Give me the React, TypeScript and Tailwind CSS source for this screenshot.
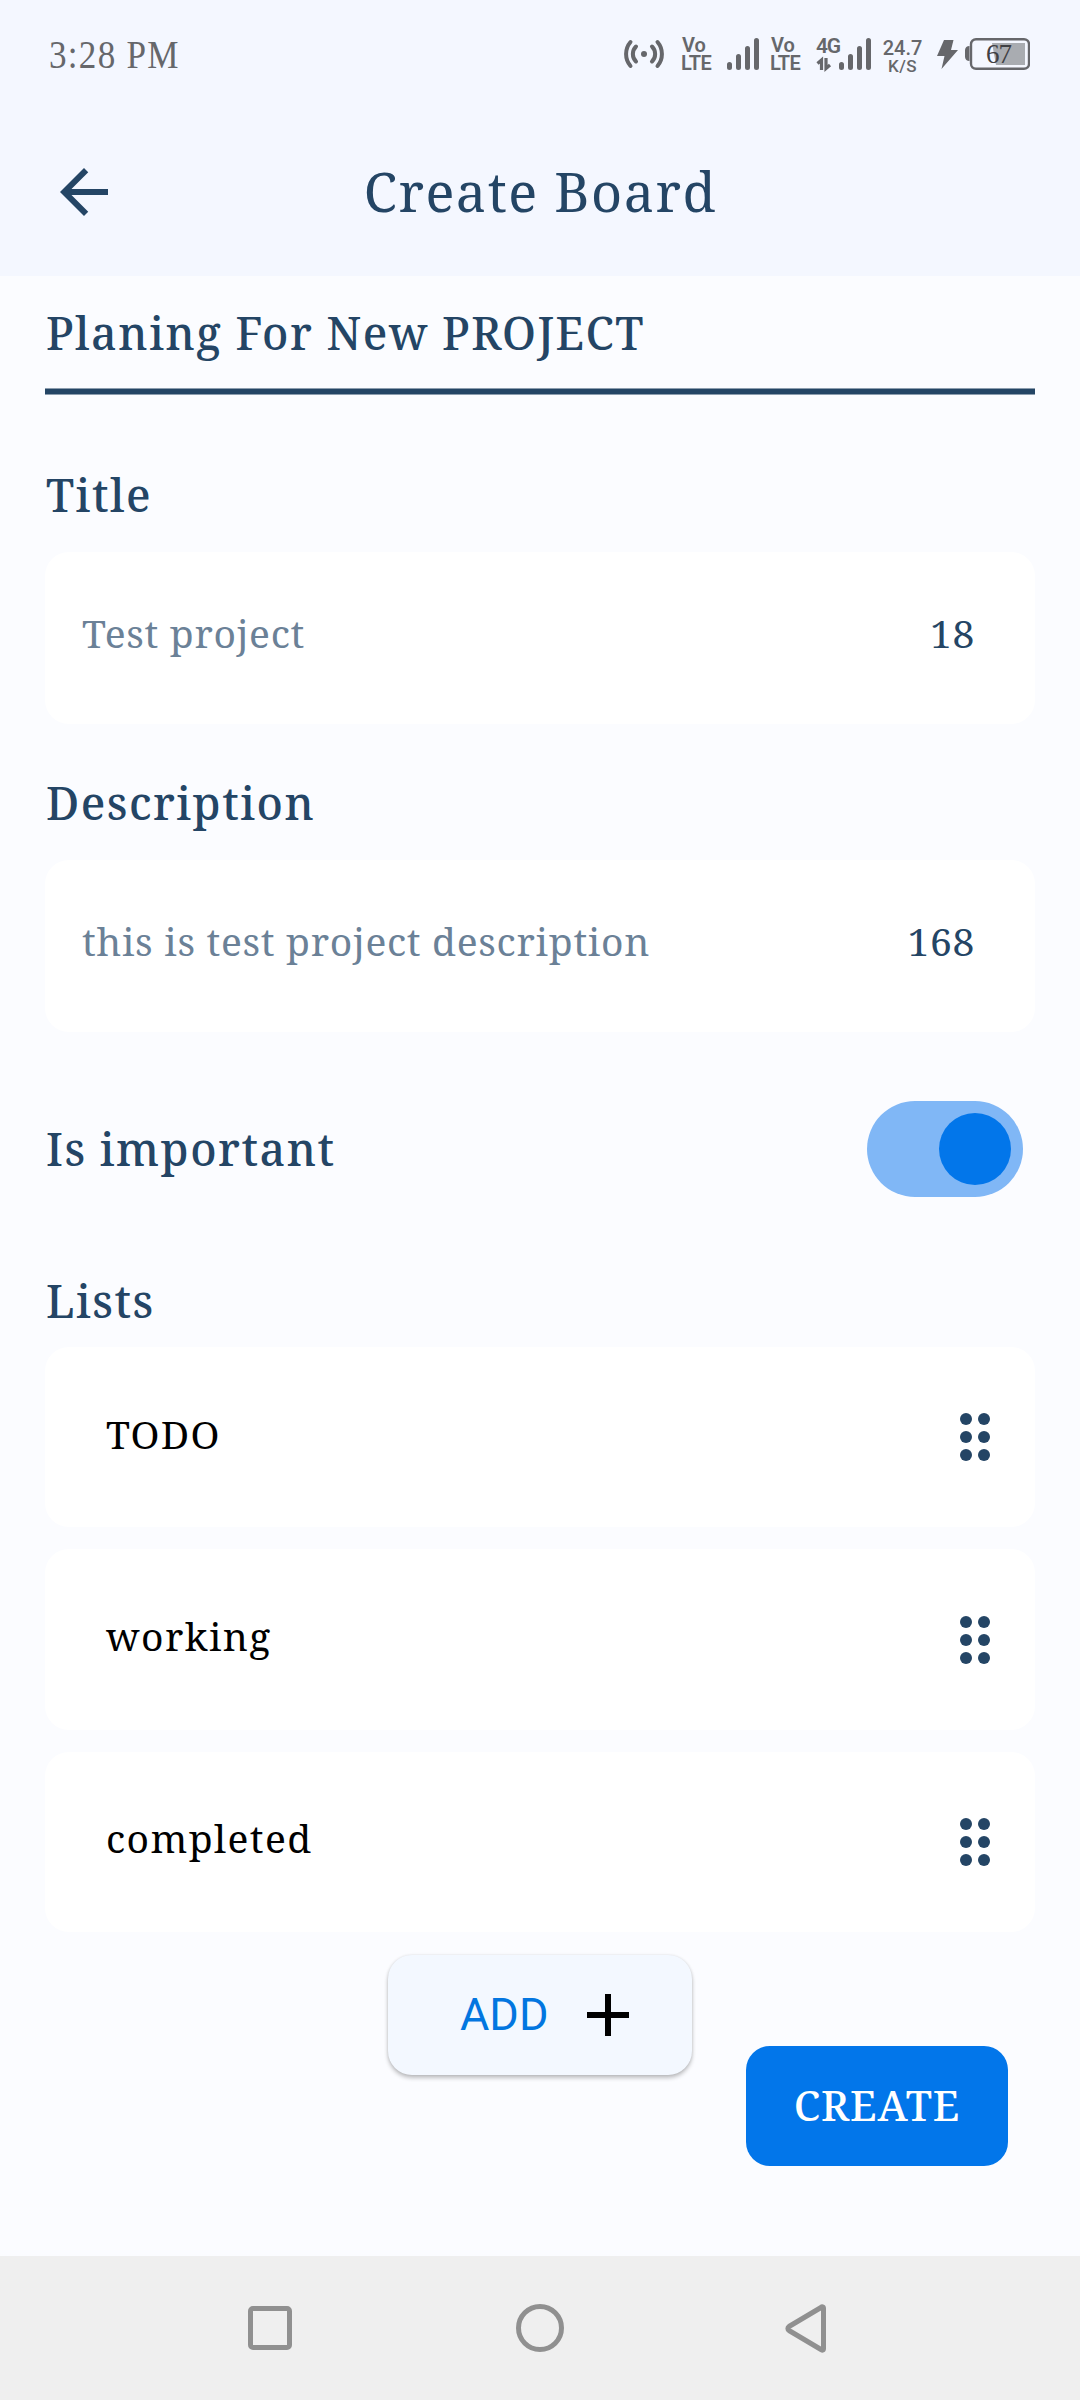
import type { ReactNode } from 'react';

const lists = ['TODO', 'working', 'completed'];

function VoLte() {
  return (
    <div className="flex w-[30px] flex-col whitespace-nowrap font-[Roboto] text-[20px] font-semibold leading-[18px]">
      <span>Vo</span>
      <span className="-ml-px tracking-[-0.7px]">LTE</span>
    </div>
  );
}

function SignalBars({ x = 0 }: { x?: number }) {
  return (
    <g stroke="currentColor" strokeWidth="5" strokeLinecap="round">
      <path d={`M${x + 2.5} 28.5v3M${x + 11.5} 20.5v11M${x + 20.5} 12.5v19M${x + 29.5} 4.5v27`} />
    </g>
  );
}

function StatusBar() {
  return (
    <div className="flex h-[108px] items-start pr-[50px] text-[#66676b]">
      <span className="ml-[49px] mt-[32px] origin-left scale-x-[0.9] whitespace-nowrap font-['Liberation_Serif',serif] text-[39px] leading-[46px] tracking-[1.4px]">
        3:28 PM
      </span>
      <div className="ml-auto mt-[36px] flex h-[36px] items-start">
        <svg width="40" height="36" viewBox="0 0 40 36" fill="none" stroke="currentColor" strokeWidth="4" strokeLinecap="round">
          <circle cx="20" cy="18" r="3" fill="currentColor" stroke="none" />
          <path d="M12 10.5a10.5 10.5 0 0 0 0 15M28 10.5a10.5 10.5 0 0 1 0 15M6.5 6a18.5 18.5 0 0 0 0 24M33.5 6a18.5 18.5 0 0 1 0 24" />
        </svg>
        <div className="ml-[18px]"><VoLte /></div>
        <svg className="ml-[15px]" width="32" height="36" viewBox="0 0 32 36"><SignalBars /></svg>
        <div className="ml-[12px]"><VoLte /></div>
        <svg className="ml-[15px] overflow-visible" width="55" height="36" viewBox="0 0 55 36">
          <text x="0" y="16.5" fill="currentColor" textLength="25" className="font-[Roboto] text-[21px] font-semibold">4G</text>
          <path d="M5.5 34V24L1.5 27.5M10 22v10.5L14 29" fill="none" stroke="currentColor" strokeWidth="3.2" />
          <SignalBars x={23} />
        </svg>
        <div className="ml-[12px] mt-[3px] flex w-[39px] flex-col items-center whitespace-nowrap font-[Roboto] leading-[18px]">
          <span className="text-[20px] font-medium">24.7</span>
          <span className="text-[17px] font-medium tracking-[0.4px]">K/S</span>
        </div>
        <svg className="ml-[15px]" width="21" height="36" viewBox="0 0 21 36" fill="currentColor">
          <path d="M7 4h9.500l-2.500 10H21L4.500 33l3-13H0z" />
        </svg>
        <svg className="ml-[7px]" width="65" height="36" viewBox="0 0 65 36">
          <path d="M4.500 10a4.500 4.500 0 0 0-4.500 4v7a4.500 4.500 0 0 0 4.500 4z" fill="currentColor" />
          <rect x="6" y="3.200" width="58" height="29.600" rx="5" fill="none" stroke="currentColor" strokeWidth="2.400" />
          <path d="M27 7h33v22H31z" fill="#a9acb1" />
          <text x="21" y="27" fill="#3f4044" textLength="26" className="font-['Liberation_Serif',serif] text-[27px]">67</text>
        </svg>
      </div>
    </div>
  );
}

function SectionLabel({ children }: { children: ReactNode }) {
  return <h2 className="pl-px text-[45px] font-medium leading-none tracking-[1.5px]">{children}</h2>;
}

function Field({ value, count }: { value: string; count: number }) {
  return (
    <div className="flex h-[172px] items-center justify-between rounded-[24px] bg-white pb-[11px] pl-[37px] pr-[60px] text-[39px] leading-none tracking-[0.7px]">
      <span className="text-[#6b8197]">{value}</span>
      <span>{count}</span>
    </div>
  );
}

function DragHandle() {
  return (
    <svg width="30" height="48" viewBox="0 0 30 48" fill="#244565">
      {[6, 24, 42].map((y) => (
        <g key={y}>
          <circle cx="6" cy={y} r="6" />
          <circle cx="24" cy={y} r="6" />
        </g>
      ))}
    </svg>
  );
}

export default function App() {
  return (
    <div className="relative flex h-[2400px] w-[1080px] flex-col overflow-hidden bg-[#fbfcff] font-['Noto_Serif','DejaVu_Serif_Condensed',serif] text-[#244565]">
      <header className="h-[276px] bg-[#f4f7ff]">
        <StatusBar />
        <div className="grid h-[168px] grid-cols-[1fr_auto_1fr] items-center">
          <svg className="ml-[60px]" width="48" height="48" viewBox="4 4 16 16" fill="#244565">
            <path d="M20 11H7.830l5.590-5.590L12 4l-8 8 8 8 1.410-1.410L7.830 13H20v-2z" />
          </svg>
          <h1 className="whitespace-nowrap pb-[2px] pl-px text-[54px] leading-none tracking-[1.5px]">Create Board</h1>
        </div>
      </header>

      <main className="flex flex-1 flex-col px-[45px]">
        <div className="flex h-[112px] items-center">
          <SectionLabel>Planing For New PROJECT</SectionLabel>
        </div>
        <div className="h-[7px] border-y border-[#8c9dae] bg-[#244565]" />

        <div className="mt-[42px] flex h-[115px] items-center"><SectionLabel>Title</SectionLabel></div>
        <Field value="Test project" count={18} />

        <div className="mt-[21px] flex h-[115px] items-center"><SectionLabel>Description</SectionLabel></div>
        <Field value="this is test project description" count={168} />

        <div className="mt-[69px] flex h-[96px] items-center justify-between pr-[12px]">
          <div className="pb-[2px]"><SectionLabel>Is important</SectionLabel></div>
          <button className="flex h-[96px] w-[156px] items-center justify-end rounded-full bg-[#80b7f6] pr-[12px]" aria-label="Is important">
            <span className="size-[72px] rounded-full bg-[#0276ea]" />
          </button>
        </div>

        <div className="mt-[57px] flex h-[93px] items-center"><SectionLabel>Lists</SectionLabel></div>
        <div className="flex flex-col gap-[22px]">
          {lists.map((name) => (
            <div key={name} className="flex h-[180.4px] items-center justify-between rounded-[24px] bg-white pl-[61px] pr-[45px]">
              <span className="pb-[8px] text-[39px] leading-none tracking-[1.4px] text-black">{name}</span>
              <DragHandle />
            </div>
          ))}
        </div>

        <button className="mt-[22.8px] flex h-[120px] w-[304px] items-center self-center rounded-[24px] bg-[#f3f8ff] pl-[72px] font-[Roboto] text-[45px] leading-none text-[#0276e0] shadow-[0_3px_4px_rgba(0,0,0,0.24),0_0_3px_rgba(0,0,0,0.1)]">
          ADD
          <svg className="ml-[39px]" width="42" height="42" viewBox="0 0 42 42" stroke="#000" strokeWidth="6">
            <path d="M0 21h42M21 0v42" />
          </svg>
        </button>
      </main>

      <button className="absolute right-[72px] top-[2045.5px] flex h-[120.5px] w-[262px] items-center justify-center rounded-[24px] bg-[#0276ea] pb-[2px] text-[42px] font-medium leading-none tracking-[0.8px] text-white">
        CREATE
      </button>

      <nav className="flex h-[144px] items-center bg-[#efefef] pl-[248px] text-[#909090]">
        <svg width="44" height="44" viewBox="0 0 44 44" fill="none" stroke="currentColor" strokeWidth="5">
          <rect x="2.500" y="2.500" width="39" height="39" rx="2.500" />
        </svg>
        <svg className="ml-[224px]" width="48" height="48" viewBox="0 0 48 48" fill="none" stroke="currentColor" strokeWidth="5">
          <circle cx="24" cy="24" r="21.500" />
        </svg>
        <svg className="ml-[221px]" width="41" height="49" viewBox="0 0 41 49" fill="none" stroke="currentColor" strokeWidth="5" strokeLinejoin="round">
          <path d="M38.500 4.500c0-2-1.500-2-2.500-1L4 22.500c-1.500 1-1.500 3 0 4L36 45.500c1 1 2.500 1 2.500-1z" />
        </svg>
      </nav>
    </div>
  );
}
